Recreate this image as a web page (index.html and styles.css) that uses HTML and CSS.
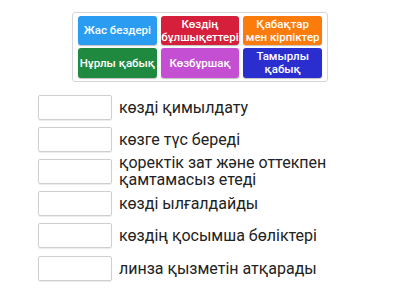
FILE: index.html
```
<!DOCTYPE html>
<html lang="kk">
<head>
	<meta charset="UTF-8">
	<title>Сәйкестендіру</title>
	<link rel="stylesheet" href="styles.css">
</head>
<body>
	<div class="bank">
		<div class="tile blue">Жас бездері</div>
		<div class="tile red">Көздің<br>бұлшықеттері</div>
		<div class="tile orange">Қабақтар<br>мен кірпіктер</div>
		<div class="tile green">Нұрлы қабық</div>
		<div class="tile purple">Көзбұршақ</div>
		<div class="tile navy">Тамырлы<br>қабық</div>
	</div>
	<div class="list">
		<div class="row"><div class="slot"></div><div class="label">көзді қимылдату</div></div>
		<div class="row"><div class="slot"></div><div class="label">көзге түс береді</div></div>
		<div class="row"><div class="slot"></div><div class="label">қоректік зат және оттекпен қамтамасыз етеді</div></div>
		<div class="row"><div class="slot"></div><div class="label">көзді ылғалдайды</div></div>
		<div class="row"><div class="slot"></div><div class="label">көздің қосымша бөліктері</div></div>
		<div class="row"><div class="slot"></div><div class="label">линза қызметін атқарады</div></div>
	</div>
</body>
</html>
```
FILE: styles.css
```
body{
	margin: 0;
	padding-top: 12px;
	background: #fff;
	font-family: Roboto, "Noto Sans", sans-serif;
	color: #222;
}
.bank{
	width: 244px;
	height: 62px;
	margin: 0 auto;
	padding: 3px 5px;
	border: 1px solid #d6d6d6;
	border-radius: 3px;
	display: grid;
	grid-template-columns: repeat(3, 1fr);
	grid-template-rows: 29px 30px;
	gap: 3px 4px;
}
.tile{
	border-radius: 3px;
	color: #fff;
	font-size: 11.5px;
	font-weight: 500;
	line-height: 13px;
	text-align: center;
	white-space: nowrap;
	display: flex;
	align-items: center;
	justify-content: center;
	box-shadow: 0 1px 1px rgba(0,0,0,0.25);
}
.blue{ background: #2a9cf2;}
.red{ background: #d61f3b;}
.orange{ background: #fb7b0c;}
.green{ background: #1f8a3f;}
.purple{ background: #c44fd3;}
.navy{ background: #2a2ecf;}
.list{
	margin-top: 9px;
	padding-left: 38px;
}
.row{
	display: flex;
	align-items: center;
	height: 32.2px;
}
.slot{
	flex: none;
	width: 72px;
	height: 23px;
	border: 1px solid #cfcfcf;
	border-radius: 2px;
	box-shadow: 0 1px 1px rgba(0,0,0,0.08);
}
.label{
	margin-left: 7px;
	font-size: 16px;
	line-height: 17px;
	width: 240px;
}
```
